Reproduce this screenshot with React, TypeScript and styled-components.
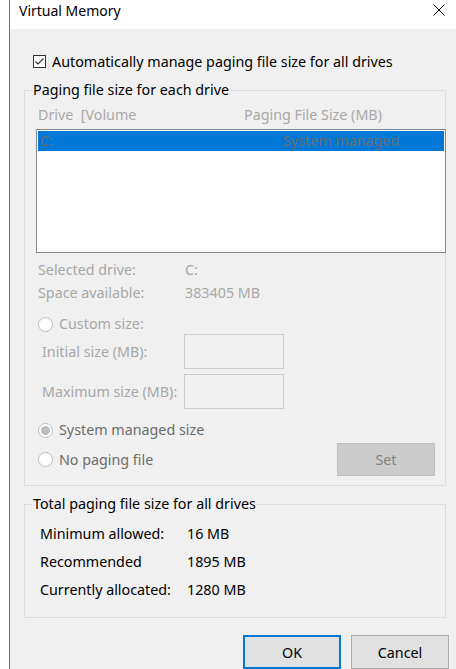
import styled, { createGlobalStyle } from 'styled-components';

const GlobalStyle = createGlobalStyle`
    html, body {
        margin: 0;
        padding: 0;
        background: #ffffff;
    }
    body {
        font-family: "Noto Sans", "Open Sans", sans-serif;
        font-size: 14.3px;
        color: #000000;
    }
`;

const Window = styled.div`
    margin-left: 9px;
    width: 446px;
    height: 669px;
    border-left: 1px solid #2b7bd4;
    display: flex;
    flex-direction: column;
    overflow: hidden;
`;

const TitleBar = styled.div`
    height: 29px;
    flex: none;
    background: #ffffff;
    display: flex;
    justify-content: space-between;
    align-items: flex-start;
    padding: 1px 11px 0 9px;
    box-sizing: border-box;
    line-height: 20px;
    font-size: 14px;
    svg {
        margin-top: 3px;
    }
`;

const Body = styled.div`
    flex: 1;
    background: #f0f0f0;
    padding: 22px 10px 0 14px;
    display: flex;
    flex-direction: column;
`;

const CheckRow = styled.label`
    display: flex;
    align-items: center;
    height: 20px;
    margin-left: 9px;
    gap: 6px;
`;

const CheckBox = styled.span`
    width: 13px;
    height: 13px;
    box-sizing: border-box;
    border: 1px solid #333333;
    background: #ffffff;
    display: flex;
    align-items: center;
    justify-content: center;
`;

const Group = styled.fieldset<{ $top: number; $bottom: number }>`
    margin: ${p => p.$top}px 0 0 0;
    padding: 0 0 ${p => p.$bottom}px 0;
    border: 1px solid #dcdcdc;
    min-width: 0;
    display: flex;
    flex-direction: column;
`;

const Legend = styled.legend`
    margin-left: 7px;
    padding: 0 1px;
    line-height: 20px;
    color: #000000;
`;

const Row = styled.div<{ $top?: number; $left?: number; $muted?: boolean }>`
    display: flex;
    align-items: center;
    height: 20px;
    line-height: 20px;
    margin-top: ${p => p.$top ?? 0}px;
    margin-left: ${p => p.$left ?? 13}px;
    color: ${p => (p.$muted ? '#a8a8a8' : '#000000')};
    white-space: nowrap;
`;

const Cell = styled.span<{ $width: number }>`
    width: ${p => p.$width}px;
    flex: none;
`;

const ListBox = styled.div`
    margin: 4px -1px 0 11px;
    height: 124px;
    box-sizing: border-box;
    border: 1px solid #828790;
    background: #ffffff;
    padding: 1px;
`;

const SelectedItem = styled.div`
    height: 20px;
    line-height: 20px;
    background: #0078d7;
    color: #6d6d6d;
    display: flex;
    padding-left: 2px;
`;

const Radio = styled.span<{ $checked?: boolean }>`
    width: 15px;
    height: 15px;
    box-sizing: border-box;
    border-radius: 50%;
    border: 1px solid #bcbcbc;
    background: #ffffff;
    margin-right: 6px;
    display: flex;
    align-items: center;
    justify-content: center;
    flex: none;
    &::after {
        content: '';
        display: ${p => (p.$checked ? 'block' : 'none')};
        width: 9px;
        height: 9px;
        border-radius: 50%;
        background: #bcbcbc;
    }
`;

const RadioLabel = styled.span<{ $muted?: boolean }>`
    color: ${p => (p.$muted ? '#a8a8a8' : '#6d6d6d')};
`;

const InputRow = styled.div<{ $top: number }>`
    display: flex;
    align-items: center;
    margin: ${p => p.$top}px 0 0 17px;
    height: 35px;
    color: #a8a8a8;
`;

const SizeInput = styled.div`
    width: 100px;
    height: 35px;
    box-sizing: border-box;
    border: 1px solid #cccccc;
    background: #f0f0f0;
`;

const BottomRow = styled.div`
    display: flex;
    align-items: center;
    justify-content: space-between;
    margin: 3px 10px 0 13px;
    height: 33px;
`;

const SetButton = styled.div`
    width: 98px;
    height: 33px;
    box-sizing: border-box;
    border: 1px solid #bfbfbf;
    background: #cccccc;
    color: #838383;
    display: flex;
    align-items: center;
    justify-content: center;
`;

const ButtonBar = styled.div`
    display: flex;
    justify-content: flex-end;
    gap: 10px;
    margin: 17px -3px 0 0;
`;

const DialogButton = styled.div<{ $default?: boolean }>`
    width: 98px;
    height: 34px;
    box-sizing: border-box;
    background: #e1e1e1;
    border: ${p => (p.$default ? '2px solid #0078d7' : '1px solid #adadad')};
    display: flex;
    align-items: center;
    justify-content: center;
    color: #000000;
`;

const CloseIcon = () => (
    <svg width="12" height="12" viewBox="0 0 12 12">
        <path d="M0.5 0.5 L11.5 11.5 M11.5 0.5 L0.5 11.5" stroke="#000" strokeWidth="1" fill="none" />
    </svg>
);

const CheckMark = () => (
    <svg width="11" height="11" viewBox="0 0 11 11">
        <path d="M1.5 5.5 L4 8 L9.5 2.5" stroke="#333" strokeWidth="1.2" fill="none" />
    </svg>
);

export default function App() {
    return <>
        <GlobalStyle />
        <Window>
            <TitleBar>
                <span>Virtual Memory</span>
                <CloseIcon />
            </TitleBar>
            <Body>
                <CheckRow>
                    <CheckBox><CheckMark /></CheckBox>
                    Automatically manage paging file size for all drives
                </CheckRow>

                <Group $top={9} $bottom={9}>
                    <Legend>Paging file size for each drive</Legend>
                    <Row $top={5} $muted>
                        <Cell $width={206}>Drive&nbsp; [Volume</Cell>
                        <span>Paging File Size (MB)</span>
                    </Row>
                    <ListBox>
                        <SelectedItem>
                            <Cell $width={243}>C:</Cell>
                            <span>System managed</span>
                        </SelectedItem>
                    </ListBox>
                    <Row $top={7} $muted>
                        <Cell $width={147}>Selected drive:</Cell>
                        <span>C:</span>
                    </Row>
                    <Row $top={3} $muted>
                        <Cell $width={147}>Space available:</Cell>
                        <span>383405 MB</span>
                    </Row>
                    <Row $top={11}>
                        <Radio />
                        <RadioLabel $muted>Custom size:</RadioLabel>
                    </Row>
                    <InputRow $top={0}>
                        <Cell $width={142}>Initial size (MB):</Cell>
                        <SizeInput />
                    </InputRow>
                    <InputRow $top={5}>
                        <Cell $width={142}>Maximum size (MB):</Cell>
                        <SizeInput />
                    </InputRow>
                    <Row $top={11}>
                        <Radio $checked />
                        <RadioLabel>System managed size</RadioLabel>
                    </Row>
                    <BottomRow>
                        <Row $left={0}>
                            <Radio />
                            <RadioLabel>No paging file</RadioLabel>
                        </Row>
                        <SetButton>Set</SetButton>
                    </BottomRow>
                </Group>

                <Group $top={8} $bottom={17}>
                    <Legend>Total paging file size for all drives</Legend>
                    <Row $top={10} $left={15}>
                        <Cell $width={147}>Minimum allowed:</Cell>
                        <span>16 MB</span>
                    </Row>
                    <Row $top={8} $left={15}>
                        <Cell $width={147}>Recommended</Cell>
                        <span>1895 MB</span>
                    </Row>
                    <Row $top={8} $left={15}>
                        <Cell $width={147}>Currently allocated:</Cell>
                        <span>1280 MB</span>
                    </Row>
                </Group>

                <ButtonBar>
                    <DialogButton $default>OK</DialogButton>
                    <DialogButton>Cancel</DialogButton>
                </ButtonBar>
            </Body>
        </Window>
    </>;
}
